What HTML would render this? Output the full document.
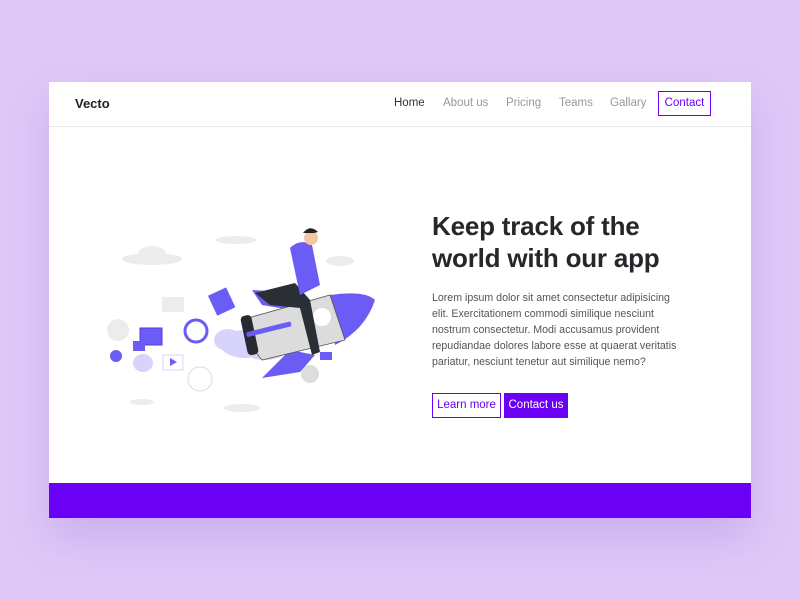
<!DOCTYPE html>
<html><head><style>
*{margin:0;padding:0;box-sizing:border-box}
body{width:800px;height:600px;background:#dfc8f8;font-family:"Liberation Sans",sans-serif;position:relative;overflow:hidden}
.card{position:absolute;left:49px;top:82px;width:702px;height:436px;background:#fff;box-shadow:0 20px 40px rgba(120,60,200,.18)}
.hdr{height:45px;border-bottom:1px solid #e8e8e8;position:relative}
.logo{position:absolute;left:26px;top:14px;font-weight:bold;font-size:13px;color:#222}
.nav{position:absolute;top:15px;font-size:11.5px;color:#999}
.cbtn{position:absolute;left:609px;top:9px;width:53px;height:25px;border:1px solid #6a00f4;color:#6a00f4;font-size:11.5px;text-align:center;line-height:23px}
h1{position:absolute;left:383px;top:128px;font-size:26px;line-height:32px;color:#26262b;font-weight:bold;letter-spacing:-0.2px}
p{position:absolute;left:383px;top:208px;font-size:10.6px;line-height:16px;color:#555;white-space:nowrap}
.b1{position:absolute;left:383px;top:311px;width:69px;height:25px;border:1px solid #6a00f4;color:#6a00f4;font-size:11.5px;text-align:center;line-height:23px}
.b2{position:absolute;left:455px;top:311px;width:64px;height:25px;background:#6a00f4;color:#fff;font-size:11.5px;text-align:center;line-height:25px}
.ft{position:absolute;left:0;bottom:0;width:702px;height:35px;background:#6a00f4}
svg{position:absolute;left:0;top:0}
</style></head><body>
<div class="card">
<div class="hdr">
<div class="logo">Vecto</div>
<div class="nav" style="left:345px;color:#333">Home</div>
<div class="nav" style="left:394px">About us</div>
<div class="nav" style="left:457px">Pricing</div>
<div class="nav" style="left:510px">Teams</div>
<div class="nav" style="left:561px">Gallary</div>
<div class="cbtn">Contact</div>
</div>
<svg width="702" height="436" viewBox="49 82 702 436">
<g fill="#ececec">
<ellipse cx="152" cy="259" rx="30" ry="6"/><ellipse cx="152" cy="254" rx="14" ry="8"/>
<ellipse cx="236" cy="240" rx="20" ry="4"/>
<ellipse cx="340" cy="261" rx="14" ry="5"/>
<ellipse cx="242" cy="408" rx="18" ry="4"/><ellipse cx="142" cy="402" rx="12" ry="3"/>
<circle cx="118" cy="330" r="11"/>
<rect x="162" y="297" width="22" height="15"/>
</g>
<circle cx="200" cy="379" r="12" fill="none" stroke="#ddd"/>
<circle cx="310" cy="374" r="9" fill="#ddd"/>
<g fill="#d6d4fa">
<ellipse cx="143" cy="363" rx="10" ry="9"/>
<ellipse cx="245" cy="344" rx="25" ry="14"/>
<ellipse cx="228" cy="340" rx="14" ry="11"/>
</g>
<rect x="140" y="328" width="22" height="17" fill="#6a5cf5" stroke="#4b3ee0"/>
<rect x="133" y="341" width="12" height="10" fill="#6a5cf5"/>
<circle cx="116" cy="356" r="6" fill="#6a5cf5"/>
<rect x="163" y="355" width="20" height="15" fill="#fff" stroke="#d6d4fa"/>
<polygon points="170,358 177,362 170,366" fill="#6a5cf5"/>
<rect x="212" y="290" width="20" height="22" fill="#6a5cf5" transform="rotate(-25 223 302)"/>
<circle cx="196" cy="331" r="11" fill="#fff" stroke="#6a5cf5" stroke-width="3"/>
<ellipse cx="265" cy="345" rx="25" ry="15" fill="#d6d4fa"/>
<polygon points="262,378 290,350 315,355 300,372" fill="#6a5cf5"/>
<polygon points="252,290 285,292 292,310 262,305" fill="#6a5cf5"/>
<path d="M330,295 Q365,290 375,300 Q365,330 335,345 Z" fill="#6a5cf5"/>
<path d="M248,318 L330,295 L345,340 L262,360 Q248,345 248,318Z" fill="#dcdcdc" stroke="#555" stroke-width="0.8"/>
<rect x="244" y="315" width="11" height="40" rx="4" fill="#262b31" transform="rotate(-12 250 335)"/>
<rect x="246" y="327" width="46" height="5" rx="2" fill="#6a5cf5" transform="rotate(-14 268 330)"/>
<circle cx="322" cy="317" r="9" fill="#fff"/>
<path d="M255,293 L295,283 L310,300 L320,352 L312,355 L300,308 L270,305 Z" fill="#2a2f36"/>
<path d="M290,248 Q300,238 312,245 L320,285 L300,295 Z" fill="#6a5cf5"/>
<circle cx="311" cy="238" r="7" fill="#f2c7a8"/>
<path d="M303,233 Q310,224 318,232 L314,233 Z" fill="#222"/>
<rect x="320" y="352" width="12" height="8" fill="#6a5cf5"/>
</svg>
<h1>Keep track of the<br>world with our app</h1>
<p>Lorem ipsum dolor sit amet consectetur adipisicing<br>elit. Exercitationem commodi similique nesciunt<br>nostrum consectetur. Modi accusamus provident<br>repudiandae dolores labore esse at quaerat veritatis<br>pariatur, nesciunt tenetur aut similique nemo?</p>
<div class="b1">Learn more</div>
<div class="b2">Contact us</div>
<div class="ft"></div>
</div>
</body></html>
